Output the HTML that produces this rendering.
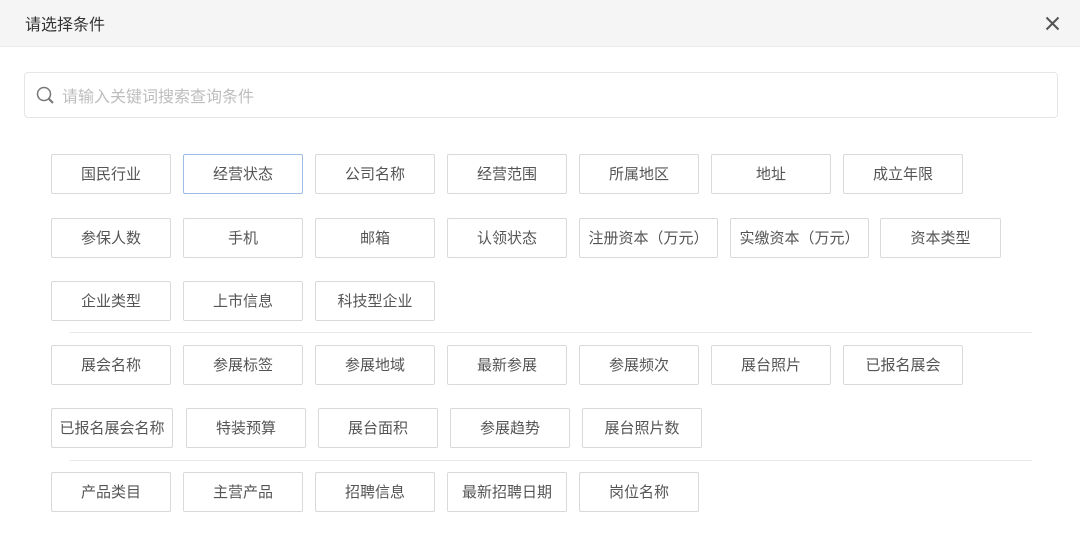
<!DOCTYPE html>
<html><head><meta charset="utf-8"><style>
*{box-sizing:border-box;margin:0;padding:0}
body{width:1080px;height:558px;background:#fff;font-family:"Liberation Sans","Noto Sans CJK SC",sans-serif;position:relative;overflow:hidden;color:#555}
.hd{position:absolute;left:0;top:0;width:1080px;height:47px;background:#f5f5f5;border-bottom:1px solid #ebebeb}
.hd span{position:absolute;left:25px;top:11px;font-size:16px;color:#333}
.x{position:absolute;left:1045px;top:16px}
.sr{position:absolute;left:24px;top:72px;width:1034px;height:46px;border:1px solid #e6e6e6;border-radius:4px}
.sr span{position:absolute;left:37px;top:10px;font-size:16px;color:#bdbdbd}
.sr svg{position:absolute;left:11px;top:13px}
.b{position:absolute;height:40px;border:1px solid #d9d9d9;border-radius:2px;font-size:15px;line-height:38px;padding-top:1px;text-align:center;color:#555;white-space:nowrap}
.sel{border-color:#9dbde6}
.ln{position:absolute;left:70px;width:962px;height:1px;background:#e8e8e8}
</style></head><body>
<div class="hd"><span>请选择条件</span>
<svg class="x" width="15" height="15" viewBox="0 0 15 15"><path d="M1.5 1.5L13.5 13.5M13.5 1.5L1.5 13.5" stroke="#555" stroke-width="2"/></svg></div>
<div class="sr"><svg width="20" height="20" viewBox="0 0 20 20"><circle cx="8" cy="8" r="6.5" fill="none" stroke="#777" stroke-width="1.5"/><path d="M12.5 12.5L17 17" stroke="#777" stroke-width="2"/></svg><span>请输入关键词搜索查询条件</span></div>

<div class="b" style="left:51px;top:154px;width:120px">国民行业</div>
<div class="b sel" style="left:183px;top:154px;width:120px">经营状态</div>
<div class="b" style="left:315px;top:154px;width:120px">公司名称</div>
<div class="b" style="left:447px;top:154px;width:120px">经营范围</div>
<div class="b" style="left:579px;top:154px;width:120px">所属地区</div>
<div class="b" style="left:711px;top:154px;width:120px">地址</div>
<div class="b" style="left:843px;top:154px;width:120px">成立年限</div>

<div class="b" style="left:51px;top:218px;width:120px">参保人数</div>
<div class="b" style="left:183px;top:218px;width:120px">手机</div>
<div class="b" style="left:315px;top:218px;width:120px">邮箱</div>
<div class="b" style="left:447px;top:218px;width:120px">认领状态</div>
<div class="b" style="left:579px;top:218px;width:139px">注册资本（万元）</div>
<div class="b" style="left:730px;top:218px;width:139px">实缴资本（万元）</div>
<div class="b" style="left:880px;top:218px;width:121px">资本类型</div>

<div class="b" style="left:51px;top:281px;width:120px">企业类型</div>
<div class="b" style="left:183px;top:281px;width:120px">上市信息</div>
<div class="b" style="left:315px;top:281px;width:120px">科技型企业</div>
<div class="ln" style="top:332px"></div>

<div class="b" style="left:51px;top:345px;width:120px">展会名称</div>
<div class="b" style="left:183px;top:345px;width:120px">参展标签</div>
<div class="b" style="left:315px;top:345px;width:120px">参展地域</div>
<div class="b" style="left:447px;top:345px;width:120px">最新参展</div>
<div class="b" style="left:579px;top:345px;width:120px">参展频次</div>
<div class="b" style="left:711px;top:345px;width:120px">展台照片</div>
<div class="b" style="left:843px;top:345px;width:120px">已报名展会</div>

<div class="b" style="left:51px;top:408px;width:122px">已报名展会名称</div>
<div class="b" style="left:186px;top:408px;width:120px">特装预算</div>
<div class="b" style="left:318px;top:408px;width:120px">展台面积</div>
<div class="b" style="left:450px;top:408px;width:120px">参展趋势</div>
<div class="b" style="left:582px;top:408px;width:120px">展台照片数</div>
<div class="ln" style="top:460px"></div>

<div class="b" style="left:51px;top:472px;width:120px">产品类目</div>
<div class="b" style="left:183px;top:472px;width:120px">主营产品</div>
<div class="b" style="left:315px;top:472px;width:120px">招聘信息</div>
<div class="b" style="left:447px;top:472px;width:120px">最新招聘日期</div>
<div class="b" style="left:579px;top:472px;width:120px">岗位名称</div>
</body></html>
